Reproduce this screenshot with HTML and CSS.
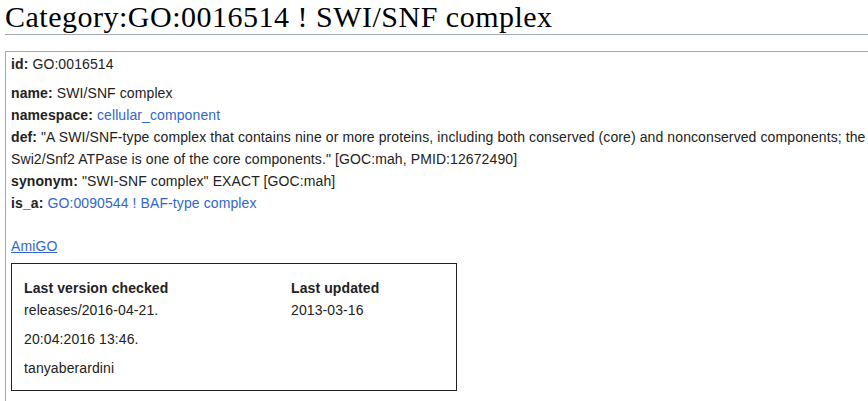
FILE: index.html
```html
<!DOCTYPE html>
<html lang="en">
<head>
    <meta charset="UTF-8">
    <title>Category:GO:0016514 ! SWI/SNF complex</title>
    <link rel="stylesheet" href="styles.css">
</head>
<body>

    <h1 class="page-title">Category:GO:0016514 ! SWI/SNF complex</h1>

    <!-- term details -->
    <div class="term-box">
        <p class="term-id"><b>id:</b> GO:0016514</p>
        <div class="term-lines">
            <div><b>name:</b> SWI/SNF complex</div>
            <div><b>namespace:</b> <a href="#">cellular_component</a></div>
            <div><b>def:</b> "A SWI/SNF-type complex that contains nine or more proteins, including both conserved (core) and nonconserved components; the Swi2/Snf2 ATPase is one of the core components." [GOC:mah, PMID:12672490]</div>
            <div><b>synonym:</b> "SWI-SNF complex" EXACT [GOC:mah]</div>
            <div><b>is_a:</b> <a href="#">GO:0090544</a> <a href="#">! BAF-type complex</a></div>
        </div>

        <p class="amigo"><a href="#" class="ext-link">AmiGO</a></p>

        <div class="version-box">
            <div class="version-col">
                <div class="col-head">Last version checked</div>
                <div>releases/2016-04-21.</div>
                <p>20:04:2016 13:46.</p>
                <p>tanyaberardini</p>
            </div>
            <div class="version-col">
                <div class="col-head">Last updated</div>
                <div>2013-03-16</div>
            </div>
        </div>
    </div>

</body>
</html>
```
FILE: styles.css
```css
html, body {
    overflow: hidden;
}
body {
    margin: 0;
    padding: 0 0 0 5px;
    font-family: "Liberation Sans", Arial, sans-serif;
    font-size: 14px;
    line-height: 22px;
    letter-spacing: 0.1px;
    color: #222;
}
a {
    color: #3366cc;
    text-decoration: none;
}
.page-title {
    width: 880px;
    margin: 0;
    font-family: "Liberation Serif", "Times New Roman", serif;
    font-size: 30px;
    font-weight: normal;
    line-height: 34px;
    letter-spacing: 0.5px;
    color: #000;
    border-bottom: 1px solid #a2a9b1;
}
.term-box {
    width: 880px;
    margin-top: 16px;
    padding: 1px 5px 12px;
    border: 1px solid #aaa;
}
.term-box p {
    margin: 0;
}
.term-id {
    margin-bottom: 7px !important;
}
.amigo {
    margin-top: 21px !important;
    margin-bottom: 6px !important;
}
.ext-link {
    text-decoration: underline;
}
.version-box {
    width: 420px;
    padding: 13px 12px 11px;
    border: 1px solid #222;
    display: grid;
    grid-template-columns: 267px auto;
}
.version-col p {
    margin: 7px 0 0;
}
.col-head {
    font-weight: bold;
}
```
